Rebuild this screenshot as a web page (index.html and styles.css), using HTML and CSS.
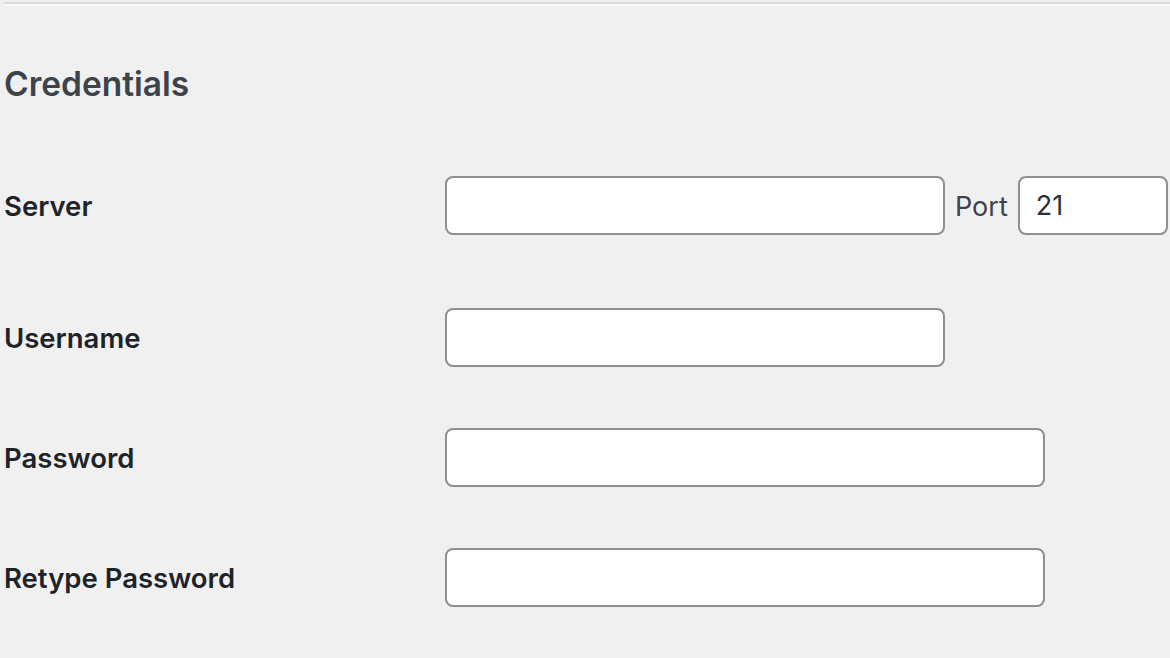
FILE: index.html
```html
<!DOCTYPE html>
<html>
<head>
<meta charset="utf-8">
<link rel="stylesheet" href="styles.css">
</head>
<body>
<div class="page">
  <hr class="sep">
  <h2 class="title">Credentials</h2>
  <div class="form">
    <div class="row row-server">
      <label class="label">Server</label>
      <div class="field">
        <span class="input w500"></span>
        <span class="port-label">Port</span>
        <span class="input w150"><span class="value">21</span></span>
      </div>
    </div>
    <div class="row row-user">
      <label class="label">Username</label>
      <div class="field"><span class="input w500"></span></div>
    </div>
    <div class="row">
      <label class="label">Password</label>
      <div class="field"><span class="input w600"></span></div>
    </div>
    <div class="row">
      <label class="label">Retype Password</label>
      <div class="field"><span class="input w600"></span></div>
    </div>
  </div>
</div>
</body>
</html>
```
FILE: styles.css
```css
* { box-sizing: border-box; }
html, body { margin: 0; padding: 0; }
body {
  background: #f0f0f1;
  font-family: Inter, "Liberation Sans", sans-serif;
  color: #1d2327;
  width: 1170px;
  height: 658px;
  overflow: hidden;
}
.page { padding: 2px 0 0 3px; }
.sep {
  margin: 0;
  height: 0;
  border: 0;
  border-top: 2px solid #dcdcde;
  border-bottom: 2px solid #f6f7f7;
}
.title {
  margin: 56px 0 0 1px;
  font-size: 33.5px;
  line-height: 44px;
  font-weight: 600;
  color: #3c434a;
}
.form { margin-top: 0; }
.row {
  display: flex;
  align-items: center;
  margin-top: 61px;
}
.row-server { margin-top: 70px; }
.row-user { margin-top: 73px; }
.label {
  width: 442px;
  padding-left: 1px;
  font-size: 27.5px;
  font-weight: 600;
  color: #1d2327;
}
.field { display: flex; align-items: center; }
.input {
  display: flex;
  align-items: center;
  height: 59px;
  background: #fff;
  border: 2px solid #8c8f94;
  border-radius: 8px;
}
.w500 { width: 500px; }
.w600 { width: 600px; }
.w150 { width: 150px; }
.port-label {
  margin: 2px 10px 0 10px;
  font-size: 27px;
  color: #3c434a;
}
.value {
  padding-left: 16px;
  font-size: 27px;
  color: #2c3338;
}
```
